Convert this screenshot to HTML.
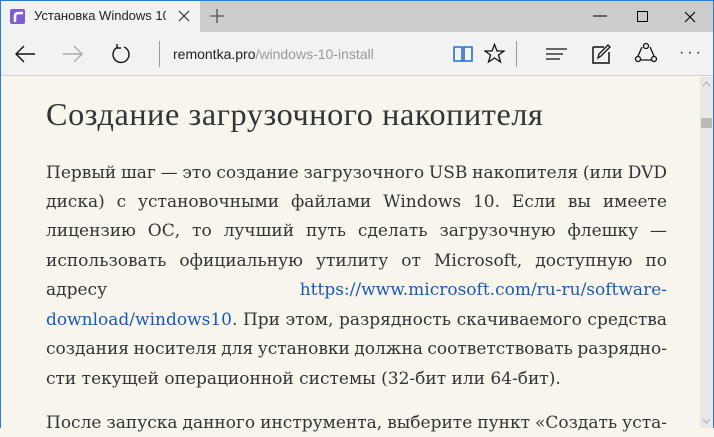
<!DOCTYPE html>
<html><head><meta charset="utf-8"><style>
*{margin:0;padding:0;box-sizing:border-box}
body{width:714px;height:428px;overflow:hidden;background:#f8f5ec;font-family:"Liberation Sans",sans-serif;position:relative}
.frame{position:absolute;inset:0;border:1px solid #2b7bd3;border-bottom:none;pointer-events:none;z-index:10}
.tabs{position:absolute;left:0;top:0;width:714px;height:32px;background:#cccccc}
.tab{position:absolute;left:0;top:0;width:200px;height:32px;background:#f2f2f2}
.toolbar{position:absolute;left:0;top:32px;width:714px;height:44px;background:#f2f2f2;border-bottom:1px solid #d2d2d2}
.t{position:absolute;font-size:13.5px;color:#222;white-space:nowrap}
.content{position:absolute;left:46px;top:79px;width:621px;font-family:"Liberation Serif",serif;color:#333}
h1{position:absolute;top:17px;left:0;font-weight:normal;font-size:32.2px;white-space:nowrap;letter-spacing:0.6px}
.l{position:absolute;left:0;width:621px;font-family:"DejaVu Serif",serif;font-size:17px;word-spacing:-3px;text-align:justify;text-align-last:justify;white-space:nowrap;height:24px}
.n{text-align-last:left;word-spacing:0}
a{color:#1a5ab0;text-decoration:none}
.sb{position:absolute;left:700px;top:77px;width:13px;height:351px;background:#e8e8e8}
</style></head><body>
<div class="tabs"></div>
<div class="tab"></div>
<svg style="position:absolute;left:10px;top:9px" width="15" height="15"><rect width="15" height="15" rx="2" fill="#7f5cd6"/><path d="M5 13V7Q5 4 9 4H13" stroke="#fff" stroke-width="2.5" fill="none"/></svg>
<div class="t" style="left:34px;top:8px;width:132px;overflow:hidden;color:#222;font-size:13px">Установка Windows 10 с</div>
<svg style="position:absolute;left:178px;top:10px" width="12" height="12"><path d="M1 1L11 11M11 1L1 11" stroke="#333" stroke-width="1.2"/></svg>
<svg style="position:absolute;left:210px;top:9px" width="14" height="14"><path d="M7 0V14M0 7H14" stroke="#555" stroke-width="1.3"/></svg>
<svg style="position:absolute;left:593px;top:15px" width="14" height="2"><path d="M0 1H14" stroke="#000"/></svg>
<svg style="position:absolute;left:637px;top:11px" width="12" height="12"><rect x=".5" y=".5" width="10" height="10" stroke="#000" fill="none"/></svg>
<svg style="position:absolute;left:684px;top:11px" width="12" height="12"><path d="M1 1L11 11M11 1L1 11" stroke="#000" stroke-width="1.1"/></svg>
<div class="toolbar"></div>
<svg style="position:absolute;left:14px;top:44px" width="22" height="20"><path d="M21 10H2M10 2L2 10L10 18" stroke="#111" stroke-width="1.4" fill="none"/></svg>
<svg style="position:absolute;left:62px;top:44px" width="22" height="20"><path d="M1 10H20M12 2L20 10L12 18" stroke="#aaa" stroke-width="1.4" fill="none"/></svg>
<svg style="position:absolute;left:110px;top:43px" width="22" height="22"><path d="M14 4A8 8 0 1 1 7 4.5M7 1V5H11" stroke="#111" stroke-width="1.4" fill="none"/></svg>
<div style="position:absolute;left:159px;top:41px;width:1px;height:26px;background:#999"></div>
<div class="t" style="left:173px;top:46px;font-size:14px">remontka.pro<span style="color:#999">/windows-10-install</span></div>
<svg style="position:absolute;left:453px;top:44px" width="20" height="20"><path d="M1 3H9V17H1ZM11 3H19V17H11ZM1 17H19" stroke="#1e73d3" stroke-width="1.6" fill="none"/></svg>
<svg style="position:absolute;left:484px;top:43px" width="21" height="21"><path d="M10.5 1.5L13 8H20L14.5 12L16.5 19L10.5 15L4.5 19L6.5 12L1 8H8Z" stroke="#111" stroke-width="1.3" fill="none"/></svg>
<div style="position:absolute;left:516px;top:41px;width:1px;height:26px;background:#999"></div>
<svg style="position:absolute;left:546px;top:47px" width="22" height="14"><path d="M0 2H21M0 7H17M0 12H14" stroke="#111" stroke-width="1.2"/></svg>
<svg style="position:absolute;left:592px;top:44px" width="20" height="20"><path d="M1 3H12M1 3V19H17V8" stroke="#111" stroke-width="1.5" fill="none"/><path d="M6 14L7 10L16 1L18 3L9 12Z" stroke="#111" stroke-width="1.3" fill="none"/></svg>
<svg style="position:absolute;left:634px;top:42px" width="24" height="22"><path d="M8 5L4 14M16 5L20 14M6 18H18" stroke="#111" stroke-width="1.3"/><circle cx="12" cy="4" r="2.5" stroke="#111" fill="#f2f2f2" stroke-width="1.3"/><circle cx="4" cy="17" r="2.5" stroke="#111" fill="#f2f2f2" stroke-width="1.3"/><circle cx="20" cy="17" r="2.5" stroke="#111" fill="#f2f2f2" stroke-width="1.3"/></svg>
<div class="t" style="left:679px;top:44px;font-size:16px;letter-spacing:3px">···</div>
<div class="content">
<h1>Создание загрузочного накопителя</h1>
<div class="l" style="top:84px">Первый шаг — это создание загрузочного USB накопителя (или DVD</div>
<div class="l" style="top:113px">диска) с установочными файлами Windows 10. Если вы имеете</div>
<div class="l" style="top:142px">лицензию ОС, то лучший путь сделать загрузочную флешку —</div>
<div class="l" style="top:172px">использовать официальную утилиту от Microsoft, доступную по</div>
<div class="l" style="top:201px">адресу <a>https://www.microsoft.com/ru-ru/software-</a></div>
<div class="l" style="top:231px"><a>download/windows10</a>. При этом, разрядность скачиваемого средства</div>
<div class="l" style="top:260px">создания носителя для установки должна соответствовать разрядно-</div>
<div class="l n" style="top:290px">сти текущей операционной системы (32-бит или 64-бит).</div>
<div class="l" style="top:334px">После запуска данного инструмента, выберите пункт «Создать уста-</div>
</div>
<div class="sb"></div>
<div style="position:absolute;left:701px;top:118px;width:11px;height:10px;background:#bdbab3"></div>
<svg style="position:absolute;left:701px;top:80px" width="11" height="8"><path d="M2 6L5.5 2L9 6" stroke="#aaa" fill="none"/></svg>
<svg style="position:absolute;left:701px;top:417px" width="11" height="8"><path d="M2 2L5.5 6L9 2" stroke="#aaa" fill="none"/></svg>
<div class="frame"></div>
</body></html>
